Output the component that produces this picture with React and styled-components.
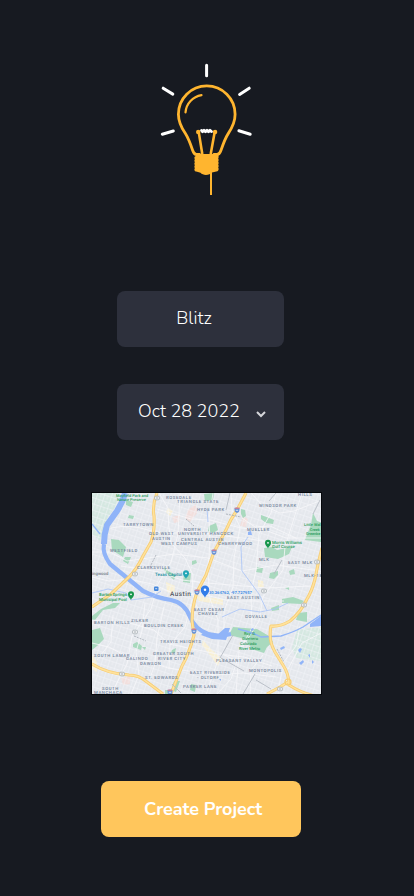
import React from "react";
import styled, { createGlobalStyle } from "styled-components";

const GlobalStyle = createGlobalStyle`
  * { box-sizing: border-box; }
  body { margin: 0; background: #171a21; font-family: Nunito, Lato, sans-serif; }
`;

const Screen = styled.main`
  width: 414px;
  height: 896px;
  display: flex;
  flex-direction: column;
  align-items: center;
  background: #171a21;
  overflow: hidden;
`;

const Logo = styled.svg`
  display: block;
  flex: none;
  width: 100px;
  height: 140px;
  margin-top: 60px;
`;

const Fields = styled.div`
  display: flex;
  flex-direction: column;
  gap: 37px;
  margin: 91px 13px 0 0;
`;

const Field = styled.button`
  width: 167px;
  height: 56px;
  display: flex;
  align-items: center;
  justify-content: ${({ $spread }) => ($spread ? "space-between" : "center")};
  padding: ${({ $spread }) => ($spread ? "0 18px 2px 21px" : "0 13px 2px 0")};
  border: 0;
  border-radius: 8px;
  background: #2d303c;
  color: #fff;
  font: 400 18px/24px Nunito, "Open Sans", sans-serif;
`;

const Value = styled.span`
  font-weight: 350;
  white-space: nowrap;
`;

const Chevron = styled.svg`
  width: 10px;
  height: 8px;
  margin-top: 6px;
`;

const MapFrame = styled.div`
  width: 231px;
  height: 203px;
  border: 1px solid #05070b;
  margin-top: 52px;
  margin-right: 1px;
`;

const MapDrawing = styled.svg`
  display: block;
  width: 229px;
  height: 201px;
`;

const CreateButton = styled.button`
  width: 200px;
  height: 56px;
  margin-top: 86px;
  margin-right: 12px;
  padding: 0 0 1px 4px;
  border: 0;
  border-radius: 8px;
  background: #ffc65c;
  color: #fff;
  font: 700 18px/24px Nunito, Lato, sans-serif;
  letter-spacing: -0.06px;
`;

function BulbLogo() {
  return (
    <Logo viewBox="157 60 100 140" fill="none" strokeLinecap="round" strokeLinejoin="round">
      <g stroke="#fff" strokeWidth="3">
        <path d="M206.6 65.3v10.5M163.2 88.2l9.6 5.9M249.2 88.2l-9.6 6.2M162.3 134.2l11-3.2M250.2 134.2l-11.3-3.5" />
      </g>
      <g stroke="#ffb52f">
        <path strokeWidth="2.8" d="M199.5 154.5h-3c-2.2 0-3.1-2-3.9-4.3-2.2-6.4-4.1-11.8-7.2-16.6-4.3-6.4-7-12.2-7-19.4a28.3 28.3 0 0 1 56.7 0c0 7.2-2.6 13-6.9 19.4-3.1 4.8-5 10.2-7.2 16.6-.8 2.3-1.9 4.3-4 4.3h-3" />
        <path strokeWidth="2.2" d="M185.5 112.4c.8-8.8 7.2-15.6 16-17.2" />
        <path strokeWidth="2.6" d="M202.2 153.5l-3.5-21.6M210.8 153.5l3.9-21.6" />
        <path strokeWidth="2" strokeLinecap="butt" d="M211 172v23" />
      </g>
      <circle cx="198.2" cy="132" r="2.2" fill="#ffb52f" />
      <circle cx="215.1" cy="132" r="2.2" fill="#ffb52f" />
      <path stroke="#fff" strokeWidth="2.8" d="M201.5 130.4l1 1.3 1.5-1.5 1.5 1.5 1.5-1.5 1.5 1.5 1.5-1.5 1.5 1.3" />
      <path fill="#ffb52f" d="M196 154h21q1.8 1.2 1.7 3l-.5 1.5.5 1.5-.5 1.5.5 1.5-.5 1.5.5 1.5-.5 1.5.5 1.5-.5 1.5q0 1-3 1.3l-3.2.7c-2 2.8-9 3.5-11.5.3l-3.4-1q-2.8-.2-2.8-2l.5-1.6-.5-1.5.5-1.5-.5-1.5.5-1.5-.5-1.5.5-1.5-.5-1.5q.2-1.6 2-2Z" />
    </Logo>
  );
}

const parks = [
  "M129 515l5 1-1 3-5-1ZM204 494l10-1-1 7-8 1ZM209 526l7-3 2 7-5 3-5-2Z",
  "M111 539l8 1 7 7-3 10-11-7Z",
  "M126 500l7 2-2 5-5-2ZM125 557l6 0-3 7-5-3Z",
  "M164 567l4 4 8 4-2 5-9-8ZM184 573l7 0-1 10-7-1Z",
  "M261 515l8 3 5 2-1 4-7-1-5-4Z",
  "M313 513l4 8 5 2v19l-17-2 3-8 3-7Z",
  "M264 548l8-1 5 3 15-3-3 7-11 5-13-2Z",
  "M257 567l6 1-1 5-6-1ZM270 573l8-2 0 4-4 4-5-1ZM289 571l5-2 1 5-5 1ZM285 588l4-1 0 3Z",
  "M271 608l8-3 0 5-7 1ZM282 599l11-2 11 4-3 3-19-1ZM298 613l9-1 0 10-11-2Z",
  "M233 627l24 2 12 7 4 6-6 5-3 6-12-4-7-10-16-4Z",
  "M92 630l8-2 4 11-7 7-5 4Z",
  "M92 616l9-7 12-6 7 0-5 5-12 2-8 10-3 0Z",
  "M133 644l4-2 5 4-1 4-8-3ZM172 650l4-2-1 5-4 0ZM174 681l6 0-4 11-5-2ZM191 684l5 1-1 7-5-2Z",
  "M165 690l6 0 2 4-8 0ZM142 647l4 0-1 3ZM192 561l4-1 1 3-5 2Z",
  "M241 509l4 1 1 6-3 2-2-4Z"
];

const ponds = "M248 532l3-1 1 4-4 0ZM310 624l12-9v11l-12 1ZM298 650l2-2 2 1-2 4ZM280 648l4-2 1 2-4 2ZM299 663l4-3 1 2-3 3ZM312 660l2 2-2 2ZM308 655l2-1 0 4ZM219 679l2 0 0 2ZM251 629l2-1 1 2-3 1Z";

const majorRoads = [
  "M157 493q-5 12-3 23 1 15-3 26l-8 14q-6 13-14 21l-18 17-19 13",
  "M246 493l-9 17q-7 10-11 20l-12 22-8 23-9 17q-5 15-5 29l2 14q-5 19-12 31l-11 28",
  "M322 548q-4 15-7 31-3 12-8 20-6 13-17 22-10 6-19 5-3 14 4 26l8 13q6 9 6 20 13 9 35 13",
  "M92 664q16 10 37 11 10 0 18 7l16 12",
  "M288 682l-8 5-13 7"
];

const minorRoads = [
  "M111 528q19-4 37 2t43 1l26 4q31 3 64 9",
  "M157 509l34 10 19 1 31 8 24 2 21 8h35",
  "M92 552l18 0 17 9 21-3 26-4 34 4 34 13 34-6 44 6",
  "M121 566l38 6 23 8 25 3 60 5 43-2",
  "M159 493l9 15q0 18 3 35l14 15 8 17-1 17 6 18",
  "M180 493l-2 41-7 28-13 22-7 25-19 27-5 28-15 28",
  "M213 493l-4 26 1 22-2 31 2 27 8 21 0 40-12 35",
  "M231 493l1 17 8 17-6 31-1 29-9 24 0 26",
  "M276 493l-5 20-12 21-3 36-5 24 1 34-13 23-3 43",
  "M302 493l-8 25-9 29-2 23-20 27-4 24-17 27",
  "M92 577l17 4 20-2 23 5 26 11 23-1 29 7 54 0",
  "M92 620l42 4 20 6 15 14 48 10 27 3 28 9",
  "M113 615l-2 27-14 18M145 603l-3 28-6 21 3 23-8 19",
  "M92 643l17 4 17 9 24 6 18 6 47 7 28-2 33 4",
  "M164 607l-7 31-2 26-7 20M192 600l-7 27-15 18-1 24",
  "M220 653l17 8-6 18-14 15M263 655l-12 15-1 24",
  "M300 626l-4 20-13 17-5 31M321 633l-19 10-14 26",
  "M251 493l11 12 18 8 14-2 28-11M242 518l13 9 15-1 26 12"
];

const labelGrey = "#74849b";
const green = "#289c5c";

const labels = [
  ["Mayfield Park and", 116, 496.5, 4, green], ["Nature Preserve", 117, 501.2, 4, green],
  ["ROSEDALE", 166, 498.5], ["TRIANGLE STATE", 177, 503], ["HYDE PARK", 197, 511],
  ["TARRYTOWN", 123, 526], ["OLD WEST", 149, 535], ["AUSTIN", 152, 540], ["WEST CAMPUS", 161, 545],
  ["NORTH", 184, 531], ["UNIVERSITY HANCOCK", 178, 535], ["CENTRAL AUSTIN", 181, 540.5], ["CHERRYWOOD", 218, 545],
  ["WINDSOR PARK", 259, 506.5], ["MUELLER", 247, 531], ["HILLS", 298, 496],
  ["Morris Williams", 272, 543.5, 4.3, green], ["Golf Course", 272, 548.3, 4.3, green],
  ["Little Wal", 304, 526, 4, green], ["Creek", 310, 531, 3.8, green], ["Greenbe", 306, 535, 3.8, green],
  ["WESTFIELD", 110, 552], ["CLARKSVILLE", 137, 569], ["MLK", 259, 561], ["EAST MLK", 288, 564], ["MLK-18", 304, 577],
  ["ingwood", 92, 575, 4.3, "#777f88"], ["Texas Capitol", 155, 576, 4.5, "#198f9f"],
  ["Barton Springs", 99, 596, 4.2, green], ["Municipal Pool", 99, 600.5, 4.2, green],
  ["30.264762, -97.727957", 209, 593.5, 4.1, "#287fe5"], ["EAST AUSTIN", 227, 599],
  ["EAST CESAR", 194, 611], ["CHAVEZ", 198, 615.3], ["ZILKER", 131, 622], ["BARTON HILLS", 94, 624],
  ["BOULDIN CREEK", 144, 627], ["GOVALLE", 245, 618], ["TRAVIS HEIGHTS", 160, 643],
  ["SOUTH LAMAR", 94, 656.5], ["GALINDO", 126, 660], ["DAWSON", 140, 665],
  ["GREATER SOUTH", 153, 655], ["RIVER CITY", 158, 660], ["ST. EDWARDS", 145, 679],
  ["EAST RIVERSIDE", 190, 674], ["- OLTORF", 197, 679], ["PLEASANT VALLEY", 216, 662],
  ["MONTOPOLIS", 249, 672], ["PARKER LANE", 183, 688], ["SOUTH", 102, 689.5], ["MANCHACA", 94, 693.5],
  ["Roy G.", 244, 635, 4.1, green], ["Guerrero", 242, 640, 4.1, green], ["Colorado", 240, 645, 4.1, green], ["River Metro", 239, 650, 4.1, green]
];

function Pin({ x, y, color, scale = 1 }) {
  return (
    <g transform={`translate(${x} ${y}) scale(${scale})`}>
      <path fill={color} d="M0 5C-.6 2.8-3 2.3-3-.7a3 3 0 1 1 6 0C3 2.3.6 2.8 0 5Z" />
      <circle cy="-.7" r=".9" fill="white" />
    </g>
  );
}

function AustinMap() {
  return (
    <MapFrame>
      <MapDrawing viewBox="92 493 229 201" role="img" aria-label="Map of Austin">
        <defs>
          <pattern id="streets" width="7" height="6" patternUnits="userSpaceOnUse" patternTransform="rotate(18)">
            <path d="M0 .5h7M.5 0v6M4 0v4" fill="none" stroke="#f3f5f8" strokeWidth=".5" />
          </pattern>
        </defs>
        <path fill="#e5e8ed" d="M92 493h229v201H92Z" />
        <path fill="#d5e8e1" d="M92 493h28l-4 13-8 11-5 14-3 10-8-7ZM297 630l24-3v34l-25-3-4-10Z" />
        <path fill="#f2dfdd" d="M188 510l8-6 1 9-7 9-5-4ZM172 517l8-2-1 7-5 1ZM243 516l5 3-2 8-6-1ZM121 678l9-2 0 8-7 1Z" />
        <path fill="#f8f0d5" d="M168 508l5 3-3 5-4-4ZM166 582l9 4-1 8-7-2ZM196 596l27 3 0 6-24-4ZM258 580l5 1 1 6-6 1ZM203 640l8 9 10 9-3 8-9-12-7-9ZM92 655l5 7 0 10-5-3Z" />
        <path fill="url(#streets)" d="M92 493h229v201H92Z" />
        <path fill="#a9d9be" d={parks.join("")} />
        <g fill="none" stroke="#f7f8fa" strokeWidth=".8">{minorRoads.map((d) => <path key={d} d={d} />)}</g>
        <g fill="none" stroke="#90b4f8" strokeLinejoin="round">
          <path strokeWidth="6" d="M125 493q-2 9-8 18l-10 14q-3 9-3 19" />
          <path strokeWidth="1.3" d="M92 524l8 10" />
          <path strokeWidth="4.2" d="M104 544q-2 9 6 20l11 9q11 9 22 18 14 7 28 9 14 3 19 17 5 12 18 17l13 2 10-2" />
          <path strokeWidth="1.4" d="M238 629q14 3 23 8l20-1q13-4 22-9l18-12" />
          <path strokeWidth=".8" stroke="#a7c3f7" d="M92 593l16-4 18 4 5 7 21-3 9-6M222 617l18-8 20 3 15-3 13-6M207 509l1 13M248 537l-7 10 1 24 17 23 8 17" />
        </g>
        <path fill="#90b4f8" d={ponds} />
        <path fill="#90b4f8" d="M205 631l12 4 8-7 5 0-4 12-14-1-11-4Z" />
        <g fill="none" strokeLinejoin="round">
          {majorRoads.map((d) => <path key={`edge-${d}`} d={d} stroke="#f7cd74" strokeWidth="3.1" />)}
          {majorRoads.map((d) => <path key={d} d={d} stroke="#ffe29c" strokeWidth="1.5" />)}
          <path stroke="#b5bbc4" strokeWidth=".9" d="M230 493l-4 17M282 560l-8 14M221 658l23 13M255 674l-12 20M256 680l15 9M172 684l9 9M269 501l7-8M233 635l-13 23M320 500l-7 14" />
          <path stroke="#a2a9b2" strokeWidth=".8" strokeDasharray="2 1" d="M186 519l8 7M134 636l12 5M226 514l15 3M156 555l-6 12M277 649l7 13" />
          <circle cx="288" cy="682" r="3" stroke="#f7cd74" strokeWidth="1.2" />
        </g>
        <g fontFamily="Roboto, sans-serif" textRendering="geometricPrecision">
          {labels.map(([text, x, y, size = 4.3, color = labelGrey]) => (
            <text key={text} x={x} y={y} fontSize={size} fontWeight="500" fill={color} letterSpacing={color === labelGrey ? ".58" : "0"}>{text}</text>
          ))}
          <text x="170" y="596" fontSize="6.5" fontWeight="500" fill="#525861" letterSpacing=".45">Austin</text>
        </g>
        {[[157,498],[135,574],[264,591],[304,605],[122,674],[280,689],[317,562],[135,632]].map(([x, y]) => (
          <g key={`${x}-${y}`}><rect x={x - 2.5} y={y - 1.8} width="5" height="3.6" rx="1.3" fill="#f9fafa" stroke="#8f989f" strokeWidth=".6" /><path d={`M${x - 1.3} ${y}h2.6`} stroke="#7a838d" strokeWidth=".7" /></g>
        ))}
        {[[237,510],[214,552],[197,592],[194,631],[170,692]].map(([x, y]) => (
          <g key={`${x}-${y}`}><path d={`M${x - 2.5} ${y - 2}q2.5-1 5 0v2q0 2.5-2.5 3-2.5-.5-2.5-3Z`} fill="#6b94d6" /><path d={`M${x - 2.2} ${y - 1.8}h4.4`} stroke="#ed7882" strokeWidth="1" /><path d={`M${x - 1.2} ${y + .3}h2.4`} stroke="#fff" strokeWidth=".7" /></g>
        ))}
        <rect x="154" y="586.5" width="4.5" height="4.5" rx="1" fill="#4386dc" /><path d="M155.2 588.7h2" stroke="#fff" strokeWidth=".7" />
        <Pin x={131} y={595} color="#17964c" />
        <Pin x={268} y={543.5} color="#17964c" />
        <Pin x={186} y={574} color="#20a6b6" />
        <Pin x={205} y={590.8} color="#337ee9" scale={1.4} />
      </MapDrawing>
    </MapFrame>
  );
}

export default function App() {
  return (
    <>
      <GlobalStyle />
      <Screen>
        <BulbLogo />
        <Fields>
          <Field><Value>Blitz</Value></Field>
          <Field $spread>
            <Value>Oct 28 2022</Value>
            <Chevron viewBox="0 0 10 8" fill="none"><path d="M1 2l4 4 4-4" stroke="#d5d6da" strokeWidth="2" /></Chevron>
          </Field>
        </Fields>
        <AustinMap />
        <CreateButton>Create Project</CreateButton>
      </Screen>
    </>
  );
}
